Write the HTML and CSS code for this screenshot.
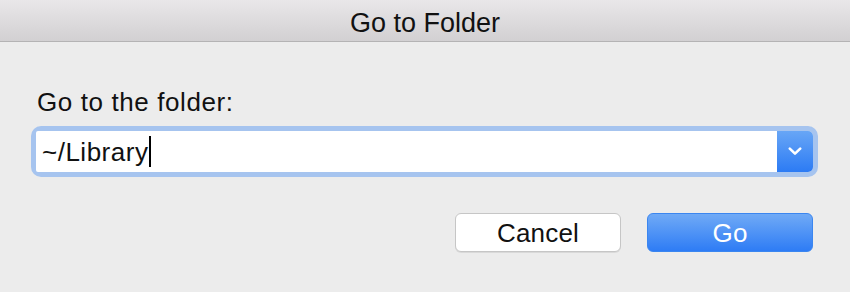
FILE: index.html
```html
<!DOCTYPE html>
<html>
<head>
<meta charset="utf-8">
<link rel="stylesheet" href="styles.css">
</head>
<body>
<div class="window">
  <div class="titlebar">Go to Folder</div>
  <div class="content">
    <div class="label">Go to the folder:</div>
    <div class="combo">
      <div class="field"><span class="value">~/Library</span><span class="caret"></span></div>
      <div class="drop">
        <svg width="14" height="9" viewBox="0 0 14 9"><path d="M1.8 1.6 L7 6.6 L12.2 1.6" fill="none" stroke="#fff" stroke-width="2.6" stroke-linecap="round" stroke-linejoin="round"/></svg>
      </div>
    </div>
    <div class="buttons">
      <div class="btn cancel">Cancel</div>
      <div class="btn go">Go</div>
    </div>
  </div>
</div>
</body>
</html>
```

FILE: styles.css
```css
html, body {
  margin: 0;
  padding: 0;
}
body {
  width: 850px;
  height: 292px;
  background: #ececec;
  font-family: "Liberation Sans", Arial, sans-serif;
  color: #111;
  overflow: hidden;
}
.titlebar {
  height: 41px;
  border-bottom: 1px solid #b4b3b4;
  background: linear-gradient(#e9e7e9, #d2d0d2);
  text-align: center;
  font-size: 27px;
  line-height: 46px;
  color: #111;
}
.content {
  padding: 0 37px 0 36px;
}
.label {
  margin-top: 45px;
  font-size: 26px;
  line-height: 30px;
  letter-spacing: 0.6px;
  padding-left: 1px;
}
.combo {
  margin-top: 14px;
  height: 41px;
  display: flex;
  border-radius: 5px;
  box-shadow: 0 0 0 5px #a6c4ef;
}
.field {
  flex: 1;
  background: #fff;
  display: flex;
  align-items: center;
  padding-left: 6px;
  border-radius: 2px 0 0 2px;
}
.value {
  font-size: 26px;
  line-height: 30px;
  letter-spacing: 0.5px;
  color: #111;
}
.caret {
  width: 2px;
  height: 31px;
  background: #000;
  margin-left: 1px;
}
.drop {
  width: 36px;
  background: linear-gradient(#68a6f6, #2c7bf4);
  border-radius: 0 5px 5px 0;
  display: flex;
  align-items: center;
  justify-content: center;
}
.buttons {
  margin-top: 41px;
  display: flex;
  justify-content: flex-end;
  gap: 26px;
}
.btn {
  width: 166px;
  height: 39px;
  box-sizing: border-box;
  border-radius: 6px;
  font-size: 26px;
  line-height: 38px;
  text-align: center;
  letter-spacing: 0.2px;
}
.cancel {
  background: #fff;
  border: 1px solid #c6c6c6;
  box-shadow: 0 1px 0 rgba(0,0,0,0.08);
  color: #111;
}
.go {
  background: linear-gradient(#70aaf6, #2e7cf5);
  border: 1px solid #3b86f0;
  color: #fff;
}
```
